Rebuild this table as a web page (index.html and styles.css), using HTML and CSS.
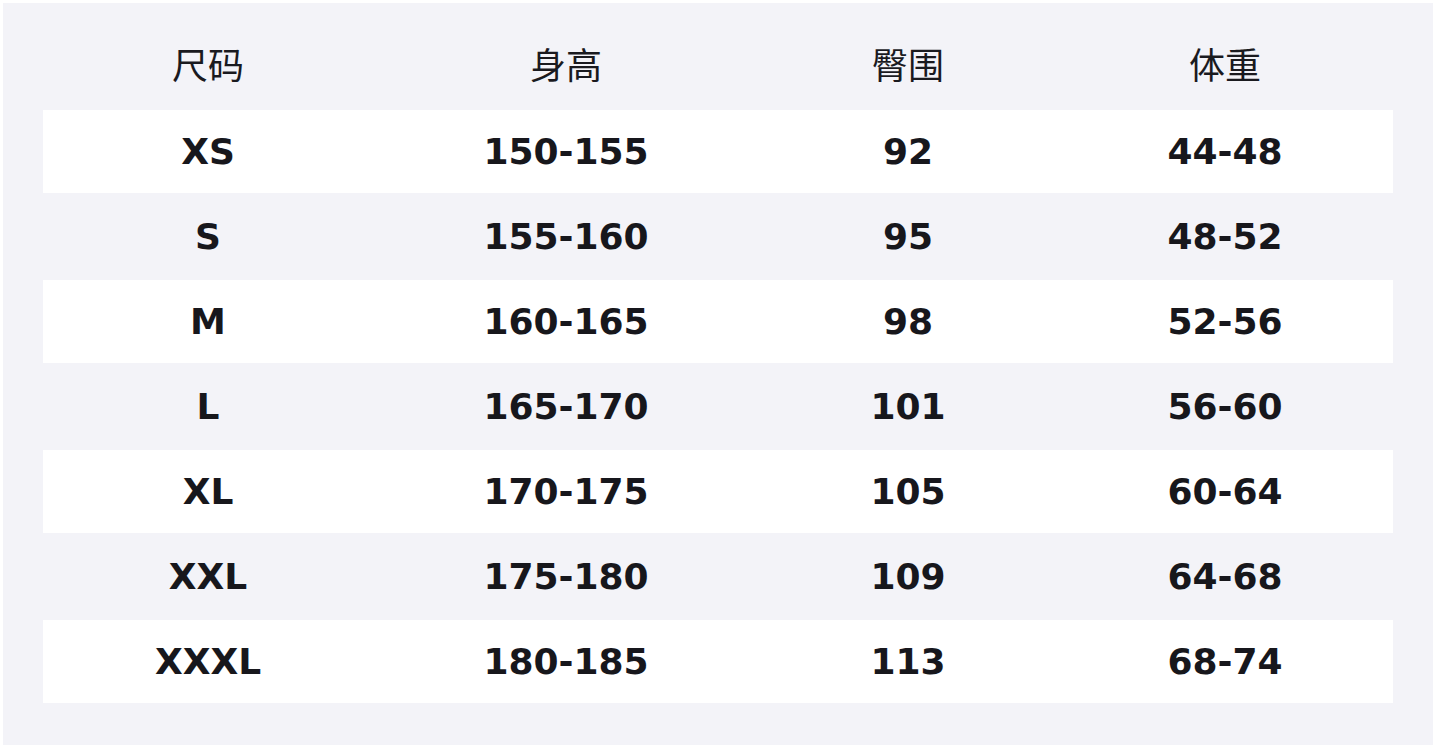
FILE: index.html
```html
<!DOCTYPE html>
<html lang="zh">
<head>
<meta charset="utf-8">
<title>尺码表</title>
<link rel="stylesheet" href="styles.css">
</head>
<body>
<div class="panel">
  <div class="table">
    <div class="row head">
      <div class="cell">尺码</div>
      <div class="cell">身高</div>
      <div class="cell">臀围</div>
      <div class="cell">体重</div>
    </div>
    <div class="row odd">
      <div class="cell">XS</div><div class="cell">150-155</div><div class="cell">92</div><div class="cell">44-48</div>
    </div>
    <div class="row">
      <div class="cell">S</div><div class="cell">155-160</div><div class="cell">95</div><div class="cell">48-52</div>
    </div>
    <div class="row odd">
      <div class="cell">M</div><div class="cell">160-165</div><div class="cell">98</div><div class="cell">52-56</div>
    </div>
    <div class="row">
      <div class="cell">L</div><div class="cell">165-170</div><div class="cell">101</div><div class="cell">56-60</div>
    </div>
    <div class="row odd">
      <div class="cell">XL</div><div class="cell">170-175</div><div class="cell">105</div><div class="cell">60-64</div>
    </div>
    <div class="row">
      <div class="cell">XXL</div><div class="cell">175-180</div><div class="cell">109</div><div class="cell">64-68</div>
    </div>
    <div class="row odd">
      <div class="cell">XXXL</div><div class="cell">180-185</div><div class="cell">113</div><div class="cell">68-74</div>
    </div>
  </div>
</div>
</body>
</html>
```
FILE: styles.css
```css
html, body {
  margin: 0;
  padding: 0;
  background: #ffffff;
}
body {
  padding: 3px;
}
.panel {
  width: 1430px;
  height: 742px;
  box-sizing: border-box;
  background: #f3f3f8;
  padding: 22px 40px 42px;
}
.table {
  display: flex;
  flex-direction: column;
  gap: 2px;
}
.row {
  display: grid;
  grid-template-columns: 330px 386px 298px 1fr;
  height: 83px;
  box-sizing: border-box;
  align-items: center;
  font-family: "DejaVu Sans", sans-serif;
  font-weight: bold;
  font-size: 36px;
  color: #17171c;
}
.row.odd {
  background: #ffffff;
}
.row.head {
  font-family: "Noto Sans CJK SC", sans-serif;
  font-weight: normal;
  font-size: 36px;
  color: #1a1a1f;
  padding-bottom: 7px;
}
.cell {
  text-align: center;
  line-height: 1;
}
```
